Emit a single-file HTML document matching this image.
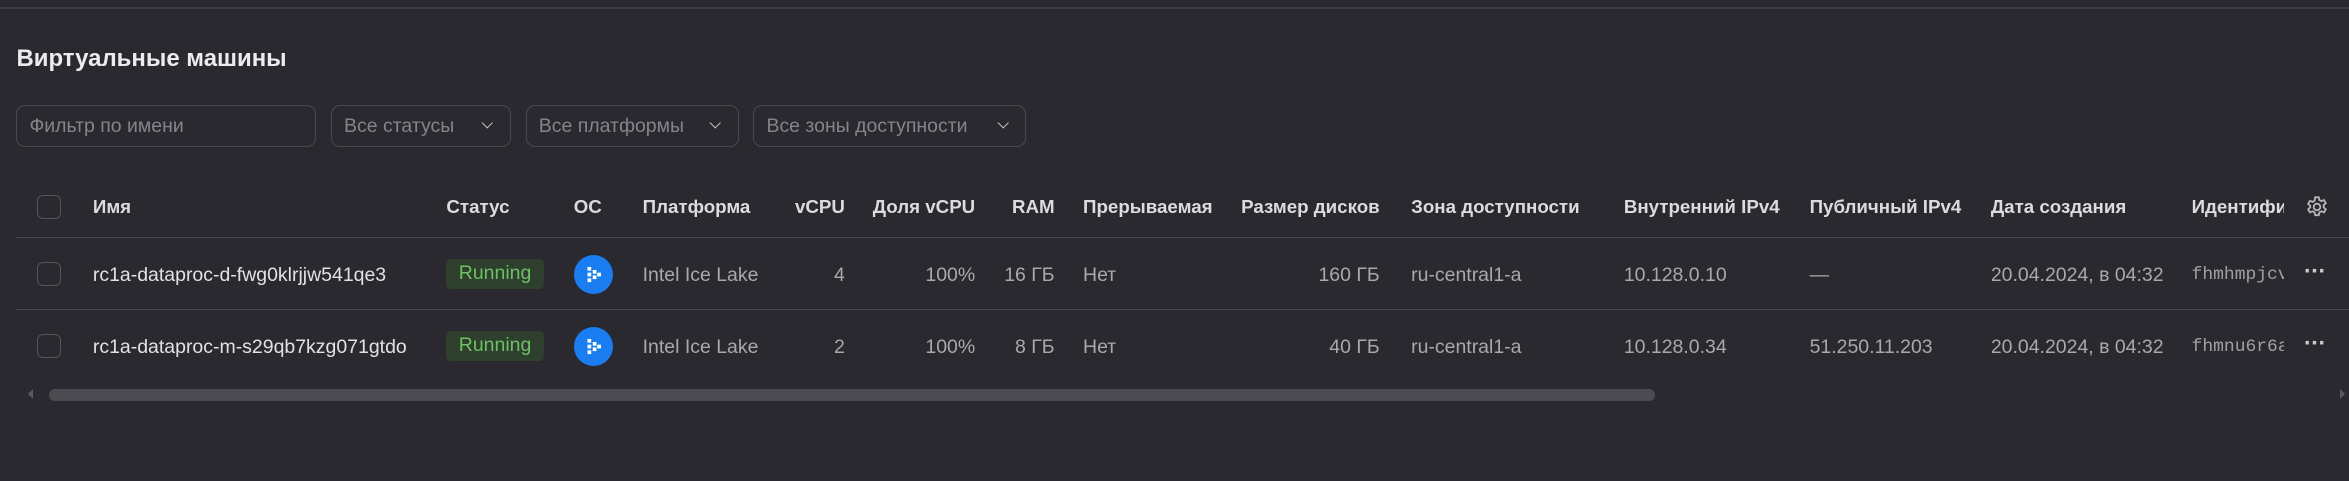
<!DOCTYPE html>
<html><head><meta charset="utf-8"><style>
html,body{margin:0;padding:0;background:#2a292f;overflow:hidden}
#w{zoom:1.498;width:1568px;height:321px;position:relative;font-family:"Liberation Sans","DejaVu Sans",sans-serif;font-size:13px;color:#a9a9ad}
.a{position:absolute;white-space:nowrap}
.h{color:#dcdcde;font-weight:bold;font-size:12.5px}
.f{position:absolute;top:70px;height:28px;border:1px solid #4a4950;border-radius:6px;box-sizing:border-box;color:#85848a;line-height:27px;padding-left:8px}
.chev{position:absolute;right:12px;top:9px;width:5px;height:5px;border-right:1.3px solid #c8c8cc;border-bottom:1.3px solid #c8c8cc;transform:rotate(45deg)}
.cb{position:absolute;left:25px;width:16px;height:16px;border:1px solid #55545a;border-radius:4px;box-sizing:border-box}
.ln{position:absolute;left:11px;right:0;height:1px;background:#47464c}
.badge{position:absolute;left:298px;width:65px;height:20px;background:#2f3f2e;border-radius:3px;color:#6cc063;text-align:center;line-height:20px}
.os{position:absolute;left:383px;width:26px;height:26px;border-radius:50%;background:#1a7ef0}
.r{text-align:right}
.mono{font-family:"Liberation Mono",monospace;font-size:12px;color:#a0a0a4;width:62px;overflow:hidden}
.dots{position:absolute;left:1538px;color:#c8c8cc;font-weight:bold;font-size:16px;letter-spacing:-0.5px}
</style></head><body><div id="w">
<div class="ln" style="top:5px;left:0;background:#3c3b41"></div>
<div class="a" style="left:11px;top:30px;font-size:16px;font-weight:bold;color:#ececee">Виртуальные машины</div>
<div class="f" style="left:11px;width:200px">Фильтр по имени</div>
<div class="f" style="left:221px;width:120px">Все статусы<span class="chev"></span></div>
<div class="f" style="left:351px;width:142px">Все платформы<span class="chev"></span></div>
<div class="f" style="left:503px;width:182px">Все зоны доступности<span class="chev"></span></div>

<div class="cb" style="top:130px"></div>
<div class="a h" style="top:131px;left:62px">Имя</div>
<div class="a h" style="top:131px;left:298px">Статус</div>
<div class="a h" style="top:131px;left:383px">ОС</div>
<div class="a h" style="top:131px;left:429px">Платформа</div>
<div class="a h r" style="top:131px;right:1004px">vCPU</div>
<div class="a h r" style="top:131px;right:917px">Доля vCPU</div>
<div class="a h r" style="top:131px;right:864px">RAM</div>
<div class="a h" style="top:131px;left:723px">Прерываемая</div>
<div class="a h r" style="top:131px;right:647px">Размер дисков</div>
<div class="a h" style="top:131px;left:942px">Зона доступности</div>
<div class="a h" style="top:131px;left:1084px">Внутренний IPv4</div>
<div class="a h" style="top:131px;left:1208px">Публичный IPv4</div>
<div class="a h" style="top:131px;left:1329px">Дата создания</div>
<div class="a h" style="top:131px;left:1463px;width:62px;overflow:hidden">Идентификатор</div>
<svg class="a" style="left:1539px;top:130px" width="16" height="16" viewBox="0 0 16 16" fill="none" stroke="#b8b8bc" stroke-width="1.2"><path d="M6.8 1.5h2.4l.4 1.9 1.3.7 1.8-.7 1.2 2-1.4 1.3v1.6l1.4 1.3-1.2 2-1.8-.7-1.3.7-.4 1.9H6.8l-.4-1.9-1.3-.7-1.8.7-1.2-2 1.4-1.3V7.2L2.1 5.9l1.2-2 1.8.7 1.3-.7z"/><circle cx="8" cy="8" r="2.2"/></svg>
<div class="ln" style="top:158px"></div>

<div class="cb" style="top:175px"></div>
<div class="a" style="top:176px;left:62px;color:#e2e2e4">rc1a-dataproc-d-fwg0klrjjw541qe3</div>
<div class="badge" style="top:173px">Running</div>
<div class="os" style="top:170px"><svg width="26" height="26" viewBox="0 0 26 26" fill="#fff"><rect x="9" y="8" width="2.5" height="2.5"/><rect x="9" y="11.8" width="2.5" height="2.5"/><rect x="9" y="15.6" width="2.5" height="2.5"/><rect x="12.5" y="10" width="2.5" height="2.5"/><rect x="12.5" y="13.6" width="2.5" height="2.5"/><rect x="15.5" y="11.8" width="2.5" height="2.5"/></svg></div>
<div class="a" style="top:176px;left:429px">Intel Ice Lake</div>
<div class="a r" style="top:176px;right:1004px">4</div>
<div class="a r" style="top:176px;right:917px">100%</div>
<div class="a r" style="top:176px;right:864px">16 ГБ</div>
<div class="a" style="top:176px;left:723px">Нет</div>
<div class="a r" style="top:176px;right:647px">160 ГБ</div>
<div class="a" style="top:176px;left:942px">ru-central1-a</div>
<div class="a" style="top:176px;left:1084px">10.128.0.10</div>
<div class="a" style="top:176px;left:1208px">—</div>
<div class="a" style="top:176px;left:1329px">20.04.2024, в 04:32</div>
<div class="a mono" style="top:177px;left:1463px">fhmhmpjcvxyz</div>
<div class="dots" style="top:172px">···</div>
<div class="ln" style="top:206px"></div>

<div class="cb" style="top:223px"></div>
<div class="a" style="top:224px;left:62px;color:#e2e2e4">rc1a-dataproc-m-s29qb7kzg071gtdo</div>
<div class="badge" style="top:221px">Running</div>
<div class="os" style="top:218px"><svg width="26" height="26" viewBox="0 0 26 26" fill="#fff"><rect x="9" y="8" width="2.5" height="2.5"/><rect x="9" y="11.8" width="2.5" height="2.5"/><rect x="9" y="15.6" width="2.5" height="2.5"/><rect x="12.5" y="10" width="2.5" height="2.5"/><rect x="12.5" y="13.6" width="2.5" height="2.5"/><rect x="15.5" y="11.8" width="2.5" height="2.5"/></svg></div>
<div class="a" style="top:224px;left:429px">Intel Ice Lake</div>
<div class="a r" style="top:224px;right:1004px">2</div>
<div class="a r" style="top:224px;right:917px">100%</div>
<div class="a r" style="top:224px;right:864px">8 ГБ</div>
<div class="a" style="top:224px;left:723px">Нет</div>
<div class="a r" style="top:224px;right:647px">40 ГБ</div>
<div class="a" style="top:224px;left:942px">ru-central1-a</div>
<div class="a" style="top:224px;left:1084px">10.128.0.34</div>
<div class="a" style="top:224px;left:1208px">51.250.11.203</div>
<div class="a" style="top:224px;left:1329px">20.04.2024, в 04:32</div>
<div class="a mono" style="top:225px;left:1463px">fhmnu6r6abcd</div>
<div class="dots" style="top:220px">···</div>

<div class="a" style="left:19px;top:260px;width:0;height:0;border-top:4px solid transparent;border-bottom:4px solid transparent;border-right:4px solid #5a595f"></div>
<div class="a" style="left:33px;top:260px;width:1072px;height:8px;border-radius:4px;background:#4c4b51"></div>
<div class="a" style="left:1562px;top:260px;width:0;height:0;border-top:4px solid transparent;border-bottom:4px solid transparent;border-left:4px solid #5a595f"></div>
</div></body></html>
